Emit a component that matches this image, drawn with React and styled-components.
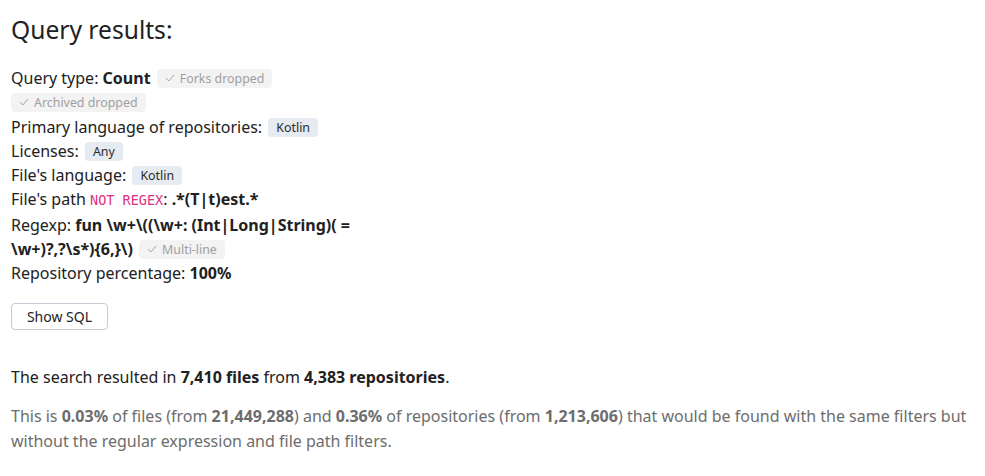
import React from 'react';
import styled, { createGlobalStyle } from 'styled-components';

const GlobalStyle = createGlobalStyle`
  body {
    margin: 0;
    background: #fff;
    font-family: "Noto Sans", "Open Sans", sans-serif;
    color: #212121;
  }
`;

const Page = styled.div`
  padding: 14px 11px 0;
`;

const Title = styled.h2`
  margin: 0 0 20px;
  font-size: 24.6px;
  font-weight: 400;
  line-height: 32px;
`;

const Filters = styled.div`
  width: 352px;
  font-size: 16px;
  line-height: 24.3px;
`;

const Line = styled.div``;

const Tag = styled.span`
  display: inline-flex;
  align-items: center;
  padding: 0 8px;
  margin-left: ${(p) => (p.$first ? '0' : '2px')};
  border-radius: 4px;
  font-size: 12.4px;
  line-height: 19px;
  height: 19px;
  vertical-align: 1px;
  background: ${(p) => (p.$muted ? '#f3f3f3' : '#e6eaf1')};
  color: ${(p) => (p.$muted ? '#a0a0a0' : '#2a2a2a')};
`;

const Check = styled.svg`
  width: 10px;
  height: 10px;
  margin-right: 5px;
`;

const Code = styled.code`
  font-family: "DejaVu Sans Mono", monospace;
  font-size: 13.5px;
  color: #e0307f;
`;

const SqlButton = styled.button`
  margin-top: 17px;
  padding: 0 14px;
  height: 27px;
  width: 97px;
  background: #fff;
  border: 1px solid #c4ccd6;
  border-radius: 4px;
  font-family: "Noto Sans", sans-serif;
  font-size: 14px;
  color: #222;
  cursor: pointer;
`;

const Summary = styled.p`
  margin: 35px 0 0;
  font-size: 16px;
  line-height: 24px;
`;

const Note = styled.p`
  margin: 15px 0 0;
  font-size: 16px;
  line-height: 25px;
  color: #6d6d6d;
  max-width: 965px;
`;

const Badge = ({ children, muted, first }) => (
  <Tag $muted={muted} $first={first}>
    {muted && (
      <Check viewBox="0 0 10 10">
        <path d="M1 5.2 L3.8 8 L9 2" fill="none" stroke="#a4a4a4" strokeWidth="1" />
      </Check>
    )}
    {children}
  </Tag>
);

export default function App() {
  return (
    <Page>
      <GlobalStyle />
      <Title>Query results:</Title>
      <Filters>
        <Line>
          Query type: <b>Count</b> <Badge muted>Forks dropped</Badge>{' '}
          <Badge muted first>Archived dropped</Badge>
        </Line>
        <Line>
          Primary language of repositories: <Badge>Kotlin</Badge>
        </Line>
        <Line>
          Licenses: <Badge>Any</Badge>
        </Line>
        <Line>
          File's language: <Badge>Kotlin</Badge>
        </Line>
        <Line>
          File's path <Code>NOT REGEX</Code>: <b>.*(T|t)est.*</b>
        </Line>
        <Line>
          Regexp: <b>fun \w+\((\w+: (Int|Long|String)( = \w+)?,?\s*)&#123;6,&#125;\)</b>{' '}
          <Badge muted>Multi-line</Badge>
        </Line>
        <Line>
          Repository percentage: <b>100%</b>
        </Line>
      </Filters>
      <SqlButton>Show SQL</SqlButton>
      <Summary>
        The search resulted in <b>7,410 files</b> from <b>4,383 repositories</b>.
      </Summary>
      <Note>
        This is <b>0.03%</b> of files (from <b>21,449,288</b>) and <b>0.36%</b> of
        repositories (from <b>1,213,606</b>) that would be found with the same filters
        but without the regular expression and file path filters.
      </Note>
    </Page>
  );
}
